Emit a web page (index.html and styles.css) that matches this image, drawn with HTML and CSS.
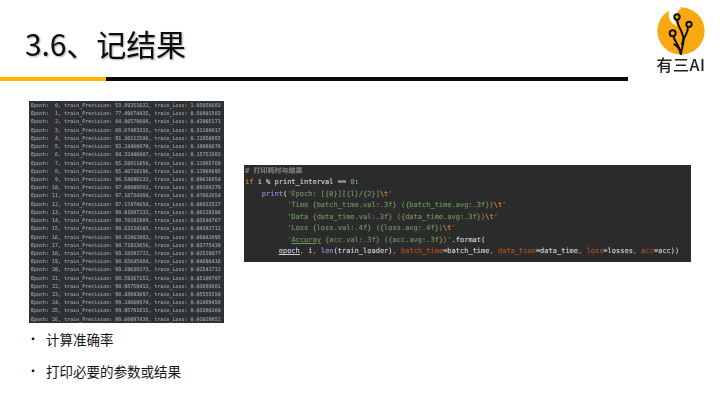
FILE: index.html
```html
<!DOCTYPE html>
<html lang="zh">
<head>
<meta charset="utf-8">
<title>3.6、记结果</title>
<link rel="stylesheet" href="styles.css">
</head>
<body>
<div class="slide">
  <header class="header">
    <div class="heading">
      <h1 class="title">3.6、记结果</h1>
      <div class="rule"><span class="rule-accent"></span><span class="rule-dark"></span></div>
    </div>
    <div class="logo">
      <svg class="logo-mark" viewBox="105 15 156 150" aria-hidden="true">
        <circle cx="183" cy="90" r="71" fill="#f9a90f"/>
        <path d="M150 22 C140 45 150 70 172 75 C160 60 162 38 185 20 C172 17 160 18 150 22Z" fill="#fff"/>
        <g fill="none" stroke="#111" stroke-width="6" stroke-linecap="round">
          <circle cx="171" cy="48" r="8"/>
          <circle cx="158" cy="97" r="9"/>
          <circle cx="207" cy="70" r="8"/>
          <path d="M172 57 C172 80 195 95 190 125 C188 138 184 148 183 158"/>
          <path d="M204 78 C205 100 190 105 186 130"/>
          <path d="M160 106 C165 125 180 135 182 158"/>
          <path d="M183 158 C180 145 172 135 163 130"/>
        </g>
      </svg>
      <div class="logo-text">有三AI</div>
    </div>
  </header>
  <main class="content">
    <pre class="log">Epoch:  0, train_Precision: 53.89251632, train_Loss: 1.05058683
Epoch:  1, train_Precision: 77.49874435, train_Loss: 0.56801583
Epoch:  2, train_Precision: 84.86579608, train_Loss: 0.42005171
Epoch:  3, train_Precision: 88.67483315, train_Loss: 0.31188817
Epoch:  4, train_Precision: 91.36112586, train_Loss: 0.22850955
Epoch:  5, train_Precision: 93.24460870, train_Loss: 0.18868676
Epoch:  6, train_Precision: 94.32446807, train_Loss: 0.15752883
Epoch:  7, train_Precision: 95.50811050, train_Loss: 0.12985769
Epoch:  8, train_Precision: 95.46718196, train_Loss: 0.12968695
Epoch:  9, train_Precision: 96.54696133, train_Loss: 0.09626854
Epoch: 10, train_Precision: 97.08609581, train_Loss: 0.09268279
Epoch: 11, train_Precision: 97.18734384, train_Loss: 0.07662654
Epoch: 12, train_Precision: 97.17478654, train_Loss: 0.08823527
Epoch: 13, train_Precision: 98.01687233, train_Loss: 0.06128398
Epoch: 14, train_Precision: 98.78281989, train_Loss: 0.03548767
Epoch: 15, train_Precision: 98.63134103, train_Loss: 0.04182711
Epoch: 16, train_Precision: 98.82862883, train_Loss: 0.06042895
Epoch: 17, train_Precision: 98.71923656, train_Loss: 0.03775439
Epoch: 18, train_Precision: 99.18382722, train_Loss: 0.02519977
Epoch: 19, train_Precision: 98.65645484, train_Loss: 0.04696416
Epoch: 20, train_Precision: 99.19638373, train_Loss: 0.02541712
Epoch: 21, train_Precision: 98.59367152, train_Loss: 0.05108787
Epoch: 22, train_Precision: 98.98758413, train_Loss: 0.03693681
Epoch: 23, train_Precision: 98.43843697, train_Loss: 0.05555550
Epoch: 24, train_Precision: 99.24660974, train_Loss: 0.02489458
Epoch: 25, train_Precision: 99.95781815, train_Loss: 0.03380260
Epoch: 26, train_Precision: 99.66097438, train_Loss: 0.01029852</pre>
    <pre class="code"><span class="c-comment"># 打印耗时与结果</span>
<span class="c-key">if</span> i % print_interval == <span class="c-num">0</span>:
    <span class="c-fn">print</span>(<span class="c-str">'Epoch: [{0}][{1}/{2}]</span><span class="c-key">\t</span><span class="c-str">'</span>
          <span class="c-str">'Time {batch_time.val:.3f} ({batch_time.avg:.3f})</span><span class="c-key">\t</span><span class="c-str">'</span>
          <span class="c-str">'Data {data_time.val:.3f} ({data_time.avg:.3f})</span><span class="c-key">\t</span><span class="c-str">'</span>
          <span class="c-str">'Loss {loss.val:.4f} ({loss.avg:.4f})</span><span class="c-key">\t</span><span class="c-str">'</span>
          <span class="c-str">'<u>Accuray</u> {acc.val:.3f} ({acc.avg:.3f})'</span>.format(
        <u>epoch</u><span class="c-key">,</span> i<span class="c-key">,</span> <span class="c-fn">len</span>(train_loader)<span class="c-key">,</span> <span class="c-arg">batch_time</span>=batch_time<span class="c-key">,</span> <span class="c-arg">data_time</span>=data_time<span class="c-key">,</span> <span class="c-arg">loss</span>=losses<span class="c-key">,</span> <span class="c-arg">acc</span>=acc))</pre>
  </main>
  <ul class="bullets">
    <li>计算准确率</li>
    <li>打印必要的参数或结果</li>
  </ul>
</div>
</body>
</html>
```
FILE: styles.css
```css
* { box-sizing: border-box; }
html, body { margin: 0; padding: 0; }
body { width: 720px; height: 405px; overflow: hidden; background: #fff; font-family: "Noto Sans CJK SC", "Noto Sans", sans-serif; }
.slide { width: 720px; height: 405px; display: flex; flex-direction: column; }
.header { display: flex; height: 101px; }
.heading { width: 628px; display: flex; flex-direction: column; }
.title {
  margin: 0; padding-left: 25px; height: 77px; font-size: 30px; font-weight: 400; line-height: 86px;
  color: #0c0c0c; letter-spacing: -0.1px; text-shadow: 1px 1px 2px rgba(0,0,0,.35); filter: blur(.3px); white-space: nowrap;
}
.rule { display: flex; height: 4px; }
.rule-accent { width: 106px; background: #fcb900; }
.rule-dark { flex: 1; background: #0a0a0a; }
.logo { width: 92px; display: flex; flex-direction: column; align-items: center; padding: 6px 0 0 14px; }
.logo-mark { width: 52px; height: 50px; display: block; flex: none; }
.logo-text { font-size: 16px; line-height: 16px; font-weight: 500; letter-spacing: .5px; color: #222; white-space: nowrap; filter: blur(.3px); }
.content { display: flex; align-items: flex-start; height: 222px; padding-left: 29px; gap: 20px; }
.log {
  margin: 0; width: 195px; height: 222px; padding: 1px 0 0 2px; background: #2e3032; color: #97a3b0;
  font: 5px/8.22px "DejaVu Sans Mono", monospace; overflow: hidden; filter: blur(.45px); text-rendering: geometricPrecision;
  -webkit-text-stroke: .12px currentColor;
}
.code {
  margin: 64px 0 0; width: 447px; height: 97px; padding: 1px 0 0 1px; background: #2b2b2b; color: #c6ced6;
  font: 500 7px/11.45px "DejaVu Sans Mono", "Noto Sans CJK SC", monospace; overflow: hidden; filter: blur(.45px);
  text-rendering: geometricPrecision; -webkit-text-stroke: .15px currentColor;
}
.c-comment { color: #808a80; }
.c-key { color: #d5802f; }
.c-num { color: #6897bb; }
.c-fn { color: #8f8fd6; }
.c-str { color: #6f9160; }
.c-arg { color: #b14d28; }
.bullets { list-style: none; margin: 0; padding: 6px 0 0 27px; font-size: 13.5px; color: #151515; }
.bullets li { height: 32px; line-height: 20px; display: flex; gap: 13px; white-space: nowrap; }
.bullets li::before { content: "•"; color: #000; font-size: 12px; width: 6px; }
```
